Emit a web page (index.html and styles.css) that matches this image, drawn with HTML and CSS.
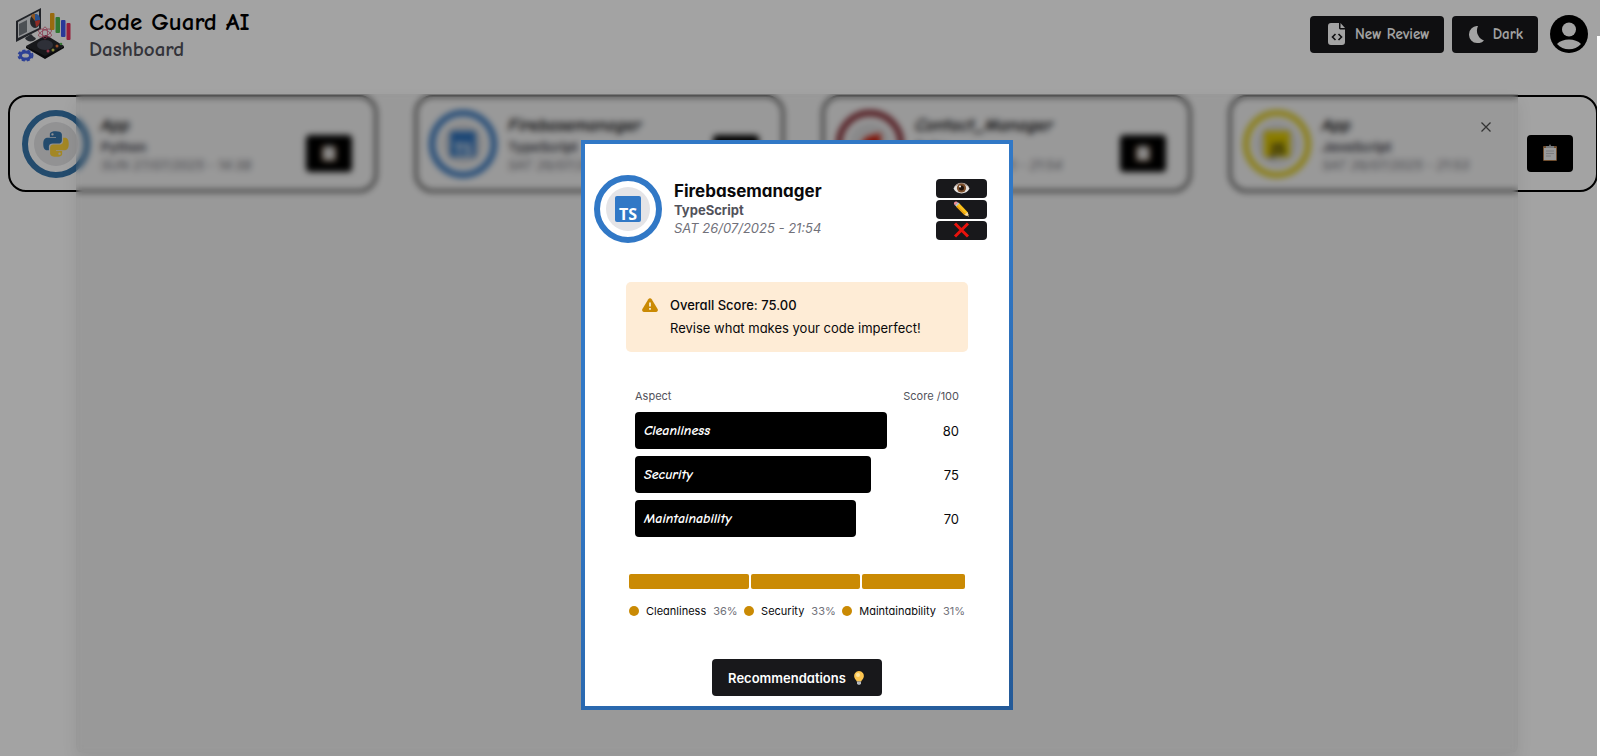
FILE: index.html
```html
<!DOCTYPE html>
<html lang="en">
<head>
<meta charset="utf-8">
<title>Code Guard AI</title>
<link rel="stylesheet" href="styles.css">
</head>
<body>
<svg class="defs" aria-hidden="true">
  <symbol id="clipboard" viewBox="0 0 16 18">
    <rect x="1" y="2" width="14" height="15" rx="1" fill="#b07a4a"/>
    <rect x="2" y="4" width="12" height="12" fill="#f1f1f1"/>
    <path d="M4 4V2h3l1-2 1 2h3v2z" fill="#b8bcc0"/>
    <path d="M4 7h8M4 9.500h8M4 12h5" stroke="#c4c4c8"/>
  </symbol>
</svg>

<header class="topbar">
  <svg class="brand-logo" viewBox="0 0 56 56" aria-hidden="true">
    <path d="M1 14 26 1v21L1 35z" fill="#34383f"/>
    <path d="M3 15 24 4v17L3 31z" fill="#e7e9ec"/>
    <path d="m4 17 8-4v12l-8 4z" fill="#777d84"/>
    <ellipse cx="20" cy="14" rx="5" ry="7" fill="#3a3d44"/>
    <path d="M20 14V7c4 0 5 3 5 6z" fill="#3c7fe0"/>
    <path d="m20 14 5-1c0 4-2 6-4 7z" fill="#e2453c"/>
    <path d="M20 14 16 9c1-2 2-2 4-2z" fill="#e08a3b"/>
    <path d="m10 31 6-4 3 3c3 1 2 3-1 4s-7 0-8-3z" fill="#41464d"/>
    <rect x="35" y="6" width="4.500" height="17" rx="1" fill="#f0a818"/>
    <rect x="40.500" y="10" width="4.500" height="16" rx="1" fill="#4cba4c"/>
    <rect x="46" y="13" width="4.500" height="17" rx="1" fill="#4257ee"/>
    <rect x="51.500" y="16" width="4" height="17" rx="1" fill="#ec2f5d"/>
    <path d="m11 39 20-11 18 11-19 12z" fill="#24262b"/>
    <path d="m11 39 19 10 19-10v2L30 52 11 41z" fill="#101114"/>
    <ellipse cx="30" cy="38" rx="8" ry="5" fill="#484b58"/>
    <g fill="none" stroke="#d84f73" stroke-width=".7"><ellipse cx="30" cy="26" rx="7" ry="3" transform="rotate(25 30 26)"/><ellipse cx="30" cy="26" rx="7" ry="3" transform="rotate(-25 30 26)"/><ellipse cx="30" cy="26" rx="2.500" ry="6"/></g>
    <circle cx="33" cy="44" r="1.500" fill="#ea5374"/><circle cx="38" cy="43" r="1.500" fill="#d2d75b"/><circle cx="42" cy="39" r="1.500" fill="#ef7a3c"/><circle cx="46" cy="37" r="1.300" fill="#58b757"/>
    <ellipse cx="10.500" cy="48.500" rx="5" ry="3.500" fill="none" stroke="#4766ea" stroke-width="3"/>
    <ellipse cx="10.500" cy="48.500" rx="7" ry="5" fill="none" stroke="#4766ea" stroke-width="2" stroke-dasharray="3 2"/>
  </svg>
  <div class="brand">
    <h1 class="brand-name">Code Guard AI</h1>
    <p class="brand-page">Dashboard</p>
  </div>
  <nav class="actions">
    <button class="btn btn-review" type="button">
      <svg width="18" height="24" viewBox="0 0 18 24" aria-hidden="true"><path fill="#fff" d="M3 1h8v5.500l1 1h5V20a3 3 0 0 1-3 3H3a3 3 0 0 1-3-3V4a3 3 0 0 1 3-3z"/><path fill="#fff" d="m12.500 1 4.500 5h-4.500z"/><path d="m7.500 12-3 3 3 3m3-6 3 3-3 3" fill="none" stroke="#18181b" stroke-width="1.600"/></svg>
      New Review
    </button>
    <button class="btn btn-theme" type="button">
      <svg width="16" height="17" viewBox="0 0 16 17" aria-hidden="true"><path fill="#fff" d="M9 0a10.500 10.500 0 0 0 6 14.500A8 8 0 0 1 8 17 8.300 8.300 0 0 1 0 8.500 8.400 8.400 0 0 1 9 0z"/></svg>
      Dark
    </button>
    <button class="profile" type="button" aria-label="Profile">
      <svg viewBox="0 0 38 38" aria-hidden="true"><circle cx="19" cy="19" r="19"/><circle cx="19" cy="14.500" r="7" fill="#fff"/><path d="M7 29c5-6 19-6 24 0-6 7-18 7-24 0z" fill="#fff"/></svg>
    </button>
  </nav>
</header>

<main class="cards">
  <article class="card">
    <span class="avatar avatar-python"><svg viewBox="0 0 110 110" aria-hidden="true"><path fill="#3776ab" d="M54 1C27 1 29 13 29 13v12h26v4H18S1 27 1 55s15 26 15 26h9V68s-1-15 15-15h26s14 0 14-14V16S82 1 54 1zM40 9a5 5 0 1 1 0 10 5 5 0 0 1 0-10z"/><path fill="#ffd43b" d="M56 109c27 0 25-12 25-12V85H55v-4h37s17 2 17-26-15-26-15-26h-9v13s1 15-15 15H44s-14 0-14 14v23s-2 15 26 15zm14-8a5 5 0 1 1 0-10 5 5 0 0 1 0 10z"/></svg></span>
    <div class="info"><h2 class="name">App</h2><p class="lang">Python</p><p class="date">SUN 27/07/2025 - 14:38</p></div>
    <button class="open" type="button" aria-label="Open App"><svg><use href="#clipboard"/></svg></button>
  </article>
  <article class="card">
    <span class="avatar avatar-ts"><svg viewBox="0 0 26 26" aria-hidden="true"><rect width="26" height="26" rx="2" fill="#3178c6"/><text x="4" y="24" class="logo-text" fill="#fff">TS</text></svg></span>
    <div class="info"><h2 class="name">Firebasemanager</h2><p class="lang">TypeScript</p><p class="date">SAT 26/07/2025 - 21:54</p></div>
    <button class="open" type="button" aria-label="Open Firebasemanager"><svg><use href="#clipboard"/></svg></button>
  </article>
  <article class="card">
    <span class="avatar avatar-ruby"><svg viewBox="0 0 26 26" aria-hidden="true"><path fill="#d4200c" d="M1 17 9 6l15-4-1 22-19 1z"/><path fill="#8e1206" d="m4 25 5-9 8 2 6 6z"/></svg></span>
    <div class="info"><h2 class="name">Contact_Manager</h2><p class="lang">Ruby</p><p class="date">SAT 26/07/2025 - 21:54</p></div>
    <button class="open" type="button" aria-label="Open Contact_Manager"><svg><use href="#clipboard"/></svg></button>
  </article>
  <article class="card">
    <span class="avatar avatar-js"><svg viewBox="0 0 26 26" aria-hidden="true"><rect width="26" height="26" fill="#e6cf00"/><text x="7" y="24" class="logo-text" fill="#222">JS</text></svg></span>
    <div class="info"><h2 class="name">App</h2><p class="lang">JavaScript</p><p class="date">SAT 26/07/2025 - 21:53</p></div>
    <button class="open" type="button" aria-label="Open App"><svg><use href="#clipboard"/></svg></button>
  </article>
</main>

<div class="scrim"></div>
<div class="gutter"></div>

<div class="drawer" role="dialog" aria-label="Review details">
  <button class="close" type="button" aria-label="Close"><svg width="10" height="10" viewBox="0 0 10 10"><path d="m.5.5 9 9m0-9-9 9" stroke="#333" stroke-width="1.300"/></svg></button>
  <section class="review">
    <header class="review-head">
      <span class="avatar avatar-ts"><svg viewBox="0 0 26 26" aria-hidden="true"><rect width="26" height="26" rx="2" fill="#3178c6"/><text x="4" y="24" class="logo-text" fill="#fff">TS</text></svg></span>
      <div class="info"><h2 class="name">Firebasemanager</h2><p class="lang">TypeScript</p><p class="date">SAT 26/07/2025 - 21:54</p></div>
      <div class="tools">
        <button class="tool" type="button" aria-label="View"><svg viewBox="0 0 16 16"><path d="M0 8.500C3 1 13 1 16 8.500 13 15 3 15 0 8.500z" fill="#e8e4e1"/><path d="M0 8C3 1 13 1 16 8 12 3 4 3 0 8z" fill="#a5958d"/><circle cx="8" cy="8" r="4.600" fill="#7b4e2b"/><circle cx="8" cy="8" r="2.500" fill="#1f120b"/><circle cx="6.500" cy="6.500" r="1" fill="#fff"/></svg></button>
        <button class="tool" type="button" aria-label="Edit"><svg viewBox="0 0 16 16"><path d="M2.500 5.500 5.500 2 14 11l1.500 4.500L11 14z" fill="#fcc21b"/><path d="m2.500 5.500 1-1.200 9 9L11 14z" fill="#e59c10"/><path d="m11 14 3-3 1.500 4.500z" fill="#f2d7a6"/><path d="M.5 3C0 1.500 1.500 0 3 .5L4.500 1.500 1.500 4.500z" fill="#f08a94"/><path d="m1.500 4.200 3-3L5.800 2.400 2.800 5.600z" fill="#b9c5cc"/><path d="m14 14.500 1-.8.500 1.800z" fill="#333"/></svg></button>
        <button class="tool" type="button" aria-label="Delete"><svg viewBox="0 0 16 16"><path d="m1.500 1.500 13 13m0-13-13 13" stroke="#e8120c" stroke-width="3"/></svg></button>
      </div>
    </header>

    <div class="review-body">
      <div class="alert" role="alert">
        <svg width="16" height="14" viewBox="0 0 16 14" aria-hidden="true"><path d="M6.300 1.200a2 2 0 0 1 3.400 0l5.900 9.800A2 2 0 0 1 14 14H2a2 2 0 0 1-1.600-3z" fill="#ca8a04"/><path d="M8 4.500v4M8 10v1.700" stroke="#fff" stroke-width="1.500"/></svg>
        <div class="alert-text"><p class="alert-title">Overall Score: 75.00</p><p>Revise what makes your code imperfect!</p></div>
      </div>

      <table class="scores">
        <thead><tr><th class="aspect">Aspect</th><th class="score">Score /100</th></tr></thead>
        <tbody>
          <tr><td><div class="bar" style="width:100%">Cleanliness</div></td><td class="score">80</td></tr>
          <tr><td><div class="bar" style="width:93.75%">Security</div></td><td class="score">75</td></tr>
          <tr><td><div class="bar" style="width:87.5%">Maintainability</div></td><td class="score">70</td></tr>
        </tbody>
      </table>

      <div class="shares">
        <div class="split"><span style="flex-grow:36"></span><span style="flex-grow:33"></span><span style="flex-grow:31"></span></div>
        <ul class="legend">
          <li><i class="dot"></i>Cleanliness <span class="pct">36%</span></li>
          <li><i class="dot"></i>Security <span class="pct">33%</span></li>
          <li><i class="dot"></i>Maintainability <span class="pct">31%</span></li>
        </ul>
      </div>
    </div>

    <button class="btn btn-tips" type="button">Recommendations
      <svg width="10" height="14" viewBox="0 0 10 14" aria-hidden="true"><path d="M5 0a5 5 0 0 1 4.600 6.500C9 8.500 7.500 9 7.300 10.500H2.700C2.500 9 1 8.500.4 6.500A5 5 0 0 1 5 0z" fill="#fcc550"/><circle cx="4" cy="4" r="2" fill="#ffe6a0"/><path d="M3 10.500h4V13l-2 1-2-1z" fill="#b3b8bd"/></svg>
    </button>
  </section>
</div>
</body>
</html>
```
FILE: styles.css
```css
* { box-sizing: border-box; }

body {
  margin: 0;
  min-height: 100vh;
  background: #fff;
  color: #09090b;
  font-family: Inter, "Noto Sans", sans-serif;
  font-feature-settings: "cv11";
  font-size: 13px;
  line-height: 20px;
}

h1, h2, p, ul { margin: 0; padding: 0; }
button { font: inherit; font-feature-settings: inherit; border: 0; padding: 0; cursor: pointer; }
svg { display: block; flex: none; }
.defs { position: absolute; width: 0; height: 0; }
.logo-text { font: 700 16px "Noto Sans", sans-serif; }

.topbar, .bar, .card .name {
  font-family: "Comic Neue", "Comic Sans MS", Inter, sans-serif;
}

.topbar {
  display: flex;
  align-items: flex-start;
  gap: 18px;
  padding: 7px 12px 0 15px;
  height: 95px;
}
.brand-logo { width: 56px; height: 56px; }
.brand { flex: 1; }
.brand-name { font-size: 25px; line-height: 30px; font-weight: 600; color: #000; }
.brand-page { font-size: 21px; line-height: 24px; font-weight: 600; color: #52525b; }

.actions { display: flex; gap: 8px; align-items: center; padding-top: 8px; }
.btn {
  display: flex;
  align-items: center;
  justify-content: center;
  height: 37px;
  border-radius: 4px;
  background: #18181b;
  color: #fff;
  font-weight: 600;
}
.btn-review { gap: 9px; padding: 0 14px 0 18px; font-size: 15px; }
.btn-theme { gap: 8px; padding: 0 15px 0 17px; font-size: 15px; }
.profile { width: 38px; height: 38px; margin-left: 4px; background: none; }

.cards {
  display: grid;
  grid-template-columns: repeat(4, 1fr);
  gap: 38px;
  padding: 0 2px 0 8px;
}
.card {
  display: flex;
  align-items: center;
  gap: 11px;
  padding: 13px 23px 12px 12px;
  border: 2px solid #000;
  border-radius: 18px;
}
.card .name { font-style: italic; line-height: 24px; }

.avatar {
  display: grid;
  place-items: center;
  flex: none;
  width: 68px;
  height: 68px;
  padding: 6px;
  border: 6px solid;
  border-radius: 50%;
  background: #e4e4e7 content-box;
}
.avatar svg { width: 26px; height: 26px; overflow: visible; }
.avatar-python { border-color: #3776ab; }
.avatar-ts { border-color: #3178c6; }
.avatar-ruby { border-color: #84202a; }
.avatar-js { border-color: #e6d21f; }

.info { flex: 1; min-width: 0; }
.name { font-size: 18px; line-height: 20px; font-weight: 700; }
.lang { line-height: 18px; font-weight: 700; color: #52525b; }
.date { line-height: 19px; font-style: italic; color: #71717a; }

.open {
  display: grid;
  place-items: center;
  width: 46px;
  height: 37px;
  margin-top: 18px;
  border-radius: 4px;
  background: #000;
}
.open svg { width: 16px; height: 18px; }

.scrim { position: fixed; inset: 0; background: rgb(0 0 0 / 36%); }
.gutter { position: fixed; top: 36px; right: 0; bottom: 0; width: 3px; background: #fff; }

.drawer {
  position: fixed;
  inset: 94px 82px 3px 76px;
  display: grid;
  place-items: center;
  padding-top: 3px;
  border-radius: 0 0 6px 6px;
  background: rgb(0 0 0 / 6%);
  backdrop-filter: blur(3px);
  box-shadow: 0 8px 16px rgb(0 0 0 / 8%);
}
.close { position: absolute; top: 28px; right: 27px; background: none; }

.review {
  display: flex;
  flex-direction: column;
  align-items: center;
  width: 432px;
  padding: 31px 0 10px;
  border: 4px solid;
  border-image: linear-gradient(150deg, #3178c6 40%, #245a98) 1;
  background: #fff;
}
.review-head {
  display: flex;
  align-items: center;
  align-self: stretch;
  gap: 12px;
  padding: 0 22px 0 9px;
}
.review .name { font-size: 17px; }
.tools { display: grid; gap: 2px; }
.tool {
  display: grid;
  place-items: center;
  width: 51px;
  height: 19px;
  border-radius: 4px;
  background: #18181b;
}
.tool svg { width: 17px; height: 16px; }

.review-body { align-self: stretch; padding: 39px 41px 0; }
.alert {
  display: flex;
  gap: 12px;
  padding: 12px 16px;
  border-radius: 5px;
  background: #feecd6;
}
.alert > svg { margin-top: 4px; }
.alert-text { line-height: 23px; }
.alert-title { font-weight: 500; }

.scores { width: 100%; margin-top: 34px; border-collapse: collapse; table-layout: fixed; }
.scores th { padding: 0 9px 3px; font-size: 11px; font-weight: 400; text-align: left; color: #52525b; }
.scores td { padding: 3px 0 4px 9px; }
.scores .score { width: 81px; padding-right: 9px; padding-left: 0; text-align: right; }
.bar {
  padding: 0 9px;
  border-radius: 4px;
  background: #000;
  color: #fff;
  font-size: 14px;
  font-style: italic;
  font-weight: 700;
  line-height: 37px;
}

.shares { padding: 33px 3px 0; }
.split { display: flex; gap: 2px; height: 15px; }
.split span { flex-basis: 0; border-radius: 2px; background: #ca8a04; }
.legend {
  display: flex;
  justify-content: space-between;
  margin-top: 12px;
  font-size: 11px;
  list-style: none;
  white-space: nowrap;
}
.legend li { display: flex; align-items: center; gap: 7px; }
.dot { width: 10px; height: 10px; border-radius: 50%; background: #ca8a04; }
.pct { color: #71717a; }

.btn-tips { gap: 8px; margin-top: 38px; padding: 0 18px 0 16px; }
```
